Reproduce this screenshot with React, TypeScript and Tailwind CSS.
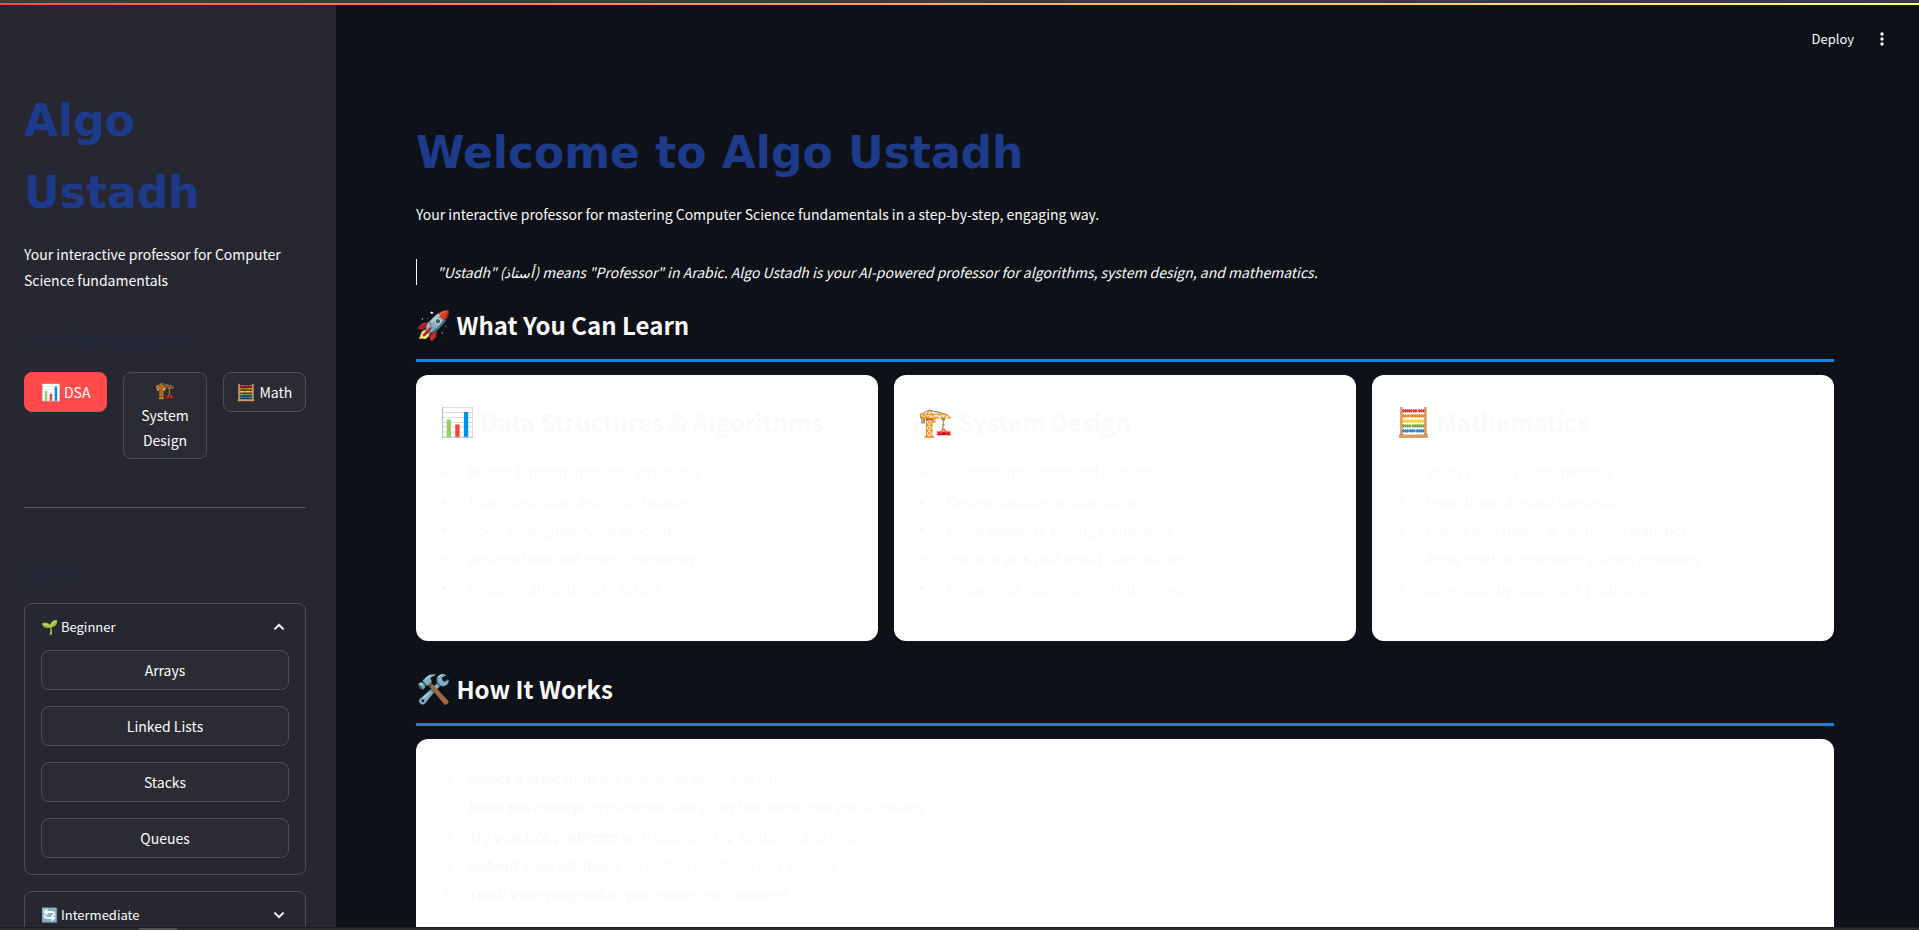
import { useState } from "react";
import type { ReactNode } from "react";

function Emoji({ children, large = false }: { children: ReactNode; large?: boolean }) {
  return (
    <span className={large ? "text-[28px] leading-none" : "text-base leading-none"} aria-hidden="true">
      {children}
    </span>
  );
}

function SidebarButton({
  children,
  primary = false,
  onClick,
}: {
  children: ReactNode;
  primary?: boolean;
  onClick?: () => void;
}) {
  return (
    <button
      type="button"
      onClick={onClick}
      className={
        primary
          ? "min-h-10 w-full rounded-lg border border-[#ff4b4b] bg-[#ff4b4b] px-2 py-[5px] text-center leading-[25px] text-white"
          : "min-h-10 w-full rounded-lg border border-[#4f4f58] bg-[#2b2b34] px-2 py-[5px] text-center leading-[25px]"
      }
    >
      {children}
    </button>
  );
}

function Chevron({ open }: { open: boolean }) {
  return (
    <svg
      width="20"
      height="20"
      viewBox="0 0 24 24"
      fill="currentColor"
      stroke="currentColor"
      strokeWidth="0.6"
      aria-hidden="true"
    >
      {open ? (
        <path d="M12 8l-6 6 1.41 1.41L12 10.83l4.59 4.58L18 14z" />
      ) : (
        <path d="M16.59 8.59L12 13.17 7.41 8.59 6 10l6 6 6-6z" />
      )}
    </svg>
  );
}

function Expander({
  icon,
  title,
  topics,
  initiallyOpen = false,
}: {
  icon: string;
  title: string;
  topics: string[];
  initiallyOpen?: boolean;
}) {
  const [open, setOpen] = useState(initiallyOpen);
  return (
    <section className="rounded-lg border border-[#4f4f58] px-4">
      <button
        type="button"
        aria-expanded={open}
        onClick={() => setOpen(!open)}
        className="flex h-[46px] w-full items-center justify-between text-[13px]"
      >
        <span>
          <span className="text-sm leading-none">{icon}</span> {title}
        </span>
        <Chevron open={open} />
      </button>
      {open && (
        <div className="flex flex-col gap-4 pb-4">
          {topics.map((topic) => (
            <SidebarButton key={topic}>{topic}</SidebarButton>
          ))}
        </div>
      )}
    </section>
  );
}

const categories = [
  { icon: "📊", name: "DSA" },
  { icon: "🏗️", name: "System Design" },
  { icon: "🧮", name: "Math" },
];

function Sidebar() {
  const [active, setActive] = useState("DSA");
  return (
    <aside className="w-[336px] shrink-0 overflow-y-auto bg-[#262730] pr-[30px] pl-6 pt-20 [scrollbar-width:none]">
      <h1 className="font-['DejaVu_Sans',sans-serif] text-[44px] leading-[72px] font-bold text-[#1e3a8a]">
        Algo Ustadh
      </h1>
      <p className="mt-3 leading-[26px]">Your interactive professor for Computer Science fundamentals</p>
      <h3 className="mt-8 text-[17px] leading-[31px] font-bold text-[#1e2a3a]">Learning Categories</h3>
      <div className="mt-4 grid grid-cols-3 items-start gap-4">
        {categories.map((c) => (
          <SidebarButton key={c.name} primary={active === c.name} onClick={() => setActive(c.name)}>
            <Emoji>{c.icon}</Emoji> {c.name}
          </SidebarButton>
        ))}
      </div>
      <hr className="mt-12 border-[#54555e]" />
      <h3 className="mt-12 text-[17px] leading-[31px] font-bold text-[#1e2a3a]">Topics</h3>
      <div className="mt-4 flex flex-col gap-4">
        <Expander icon="🌱" title="Beginner" topics={["Arrays", "Linked Lists", "Stacks", "Queues"]} initiallyOpen />
        <Expander icon="🔄" title="Intermediate" topics={[]} />
      </div>
    </aside>
  );
}

const cards = [
  {
    icon: "📊",
    title: "Data Structures & Algorithms",
    items: [
      "Master fundamental data structures",
      "Learn algorithm design techniques",
      "Solve coding interview problems",
      "Analyze time and space complexity",
      "Visualize algorithms in action",
    ],
  },
  {
    icon: "🏗️",
    title: "System Design",
    items: [
      "Understand distributed systems",
      "Design scalable architectures",
      "Learn database scaling techniques",
      "Practice with real-world case studies",
      "Prepare for system design interviews",
    ],
  },
  {
    icon: "🧮",
    title: "Mathematics",
    items: [
      "Study calculus fundamentals",
      "Learn linear algebra concepts",
      "Master descriptive & inferential statistics",
      "Apply math to computer science problems",
      "Solve step-by-step math problems",
    ],
  },
];

const steps = [
  { lead: "Select a topic", rest: "from the sidebar to begin learning" },
  { lead: "Read the concept", rest: "explanation and study the interactive visualizations" },
  { lead: "Try practice problems", rest: "with step-by-step guidance and hints" },
  { lead: "Submit your solutions", rest: "for instant feedback and analysis" },
  { lead: "Track your progress", rest: "as you master each concept" },
];

function SectionHeading({ icon, children }: { icon: string; children: ReactNode }) {
  return (
    <h2 className="border-b-[3px] border-[#1c83e1] pb-3 text-2xl leading-[44px] font-semibold">
      <Emoji large>{icon}</Emoji> {children}
    </h2>
  );
}

function Main() {
  return (
    <main className="min-w-0 flex-1 overflow-y-auto pr-[85px] pl-20 [scrollbar-width:none]">
      <header className="-mr-[85px] flex h-[68px] items-center justify-end gap-[18px] pr-[27px]">
        <button type="button" className="text-[13px]">
          Deploy
        </button>
        <button type="button" aria-label="Main menu">
          <svg width="20" height="20" viewBox="0 0 24 24" fill="currentColor" aria-hidden="true">
            <circle cx="12" cy="6" r="2" />
            <circle cx="12" cy="12" r="2" />
            <circle cx="12" cy="18" r="2" />
          </svg>
        </button>
      </header>
      <h1 className="mt-11 font-['DejaVu_Sans',sans-serif] text-[44px] leading-[72px] font-bold text-[#1e3a8a]">
        Welcome to Algo Ustadh
      </h1>
      <p className="mt-3 leading-[26px]">
        Your interactive professor for mastering Computer Science fundamentals in a step-by-step, engaging way.
      </p>
      <blockquote className="mt-8 border-l border-[#fafafa] pl-5 leading-[26px] italic">
        "Ustadh" (أستاذ) means "Professor" in Arabic. Algo Ustadh is your AI-powered professor for algorithms,
        system design, and mathematics.
      </blockquote>
      <div className="mt-[18px]">
        <SectionHeading icon="🚀">What You Can Learn</SectionHeading>
      </div>
      <div className="mt-[13px] grid grid-cols-3 gap-4">
        {cards.map((card) => (
          <article key={card.title} className="rounded-xl bg-white px-6 pt-6 pb-10">
            <h3 className="text-2xl leading-[46px] font-semibold text-[#fafafa]">
              <Emoji large>{card.icon}</Emoji> {card.title}
            </h3>
            <ul className="mt-[14px] flex flex-col gap-[3px] leading-[26px] text-[#fafafa]">
              {card.items.map((item) => (
                <li key={item} className="flex items-center pl-0.5">
                  <span className="mr-[22px] size-[5px] rounded-full bg-[#fafafa]" />
                  {item}
                </li>
              ))}
            </ul>
          </article>
        ))}
      </div>
      <div className="mt-[26px]">
        <SectionHeading icon="🛠️">How It Works</SectionHeading>
      </div>
      <section className="mt-[13px] rounded-xl bg-white px-6 pt-[26px] pb-10">
        <ol className="flex flex-col gap-[3px] leading-[26px] text-[#fafafa]">
          {steps.map((step, i) => (
            <li key={step.lead} className="flex pl-1">
              <span className="w-[25px]">{i + 1}.</span>
              <span>
                <strong className="font-semibold">{step.lead}</strong> {step.rest}
              </span>
            </li>
          ))}
        </ol>
      </section>
    </main>
  );
}

export default function App() {
  return (
    <div className="flex h-screen flex-col bg-[#0e1117] font-['Noto_Sans_CJK_JP','DejaVu_Sans',sans-serif] text-sm text-[#fafafa]">
      <div className="h-[3px] shrink-0 bg-[#3b3a3c]" />
      <div className="h-0.5 shrink-0 bg-linear-to-r from-[#ff4b4b] to-[#fffd80]" />
      <div className="flex min-h-0 flex-1">
        <Sidebar />
        <Main />
      </div>
      <div className="h-[3px] shrink-0 border-t border-[#1c1c1c] bg-[#2c2a2b] pl-[139px]">
        <div className="h-0.5 w-[38px] bg-[#505050]" />
      </div>
    </div>
  );
}
